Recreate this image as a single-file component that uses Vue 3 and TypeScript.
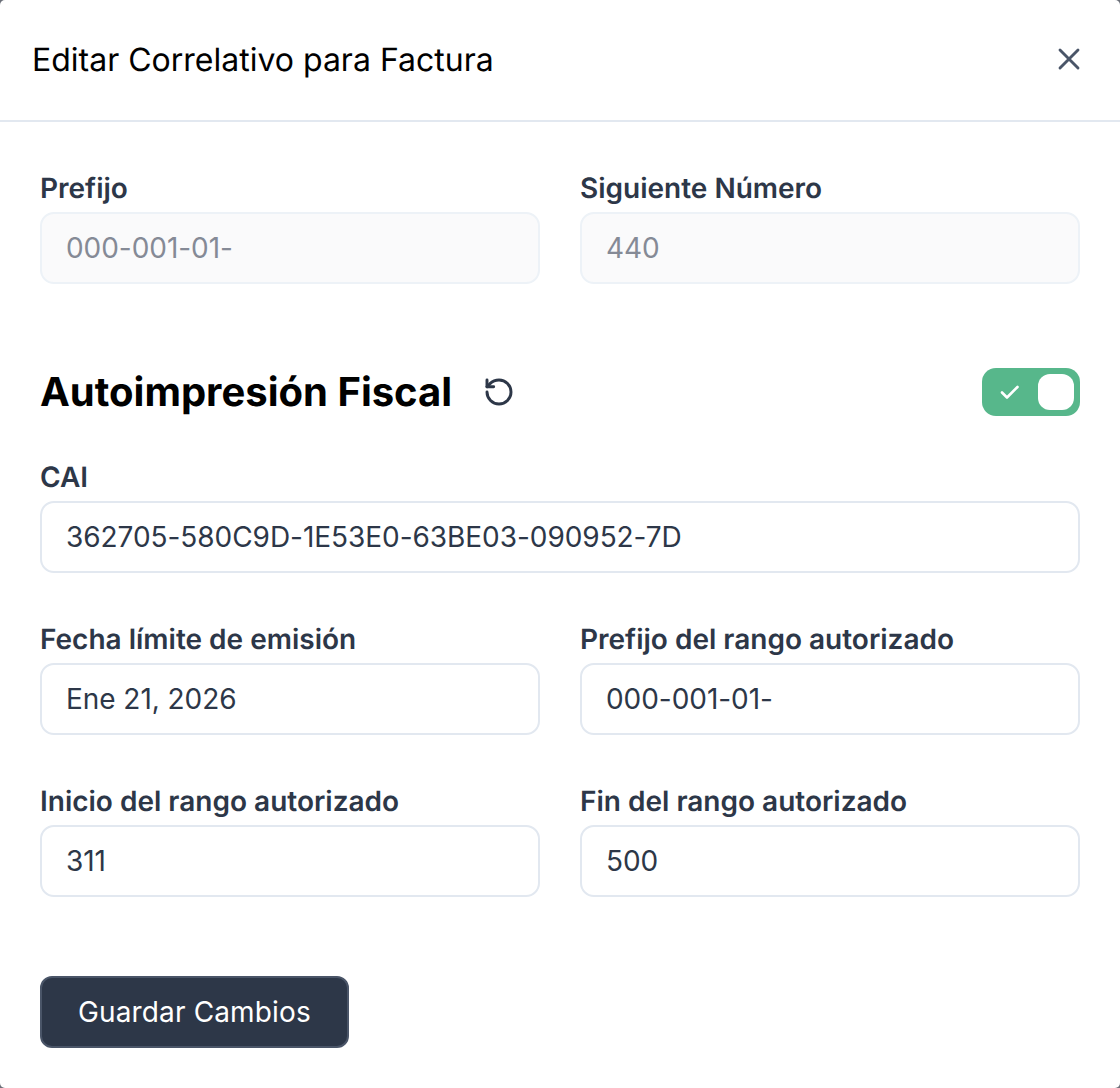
<script setup lang="ts">
interface Field {
  label: string
  value: string
}

const topFields: Field[] = [
  { label: 'Prefijo', value: '000-001-01-' },
  { label: 'Siguiente Número', value: '440' },
]

const rangeFields: Field[] = [
  { label: 'Fecha límite de emisión', value: 'Ene 21, 2026' },
  { label: 'Prefijo del rango autorizado', value: '000-001-01-' },
  { label: 'Inicio del rango autorizado', value: '311' },
  { label: 'Fin del rango autorizado', value: '500' },
]
</script>

<template>
  <div class="modal">
    <header class="modal-header">
      <h2 class="modal-title">Editar Correlativo para Factura</h2>
      <button class="close-btn" type="button" aria-label="Cerrar">
        <svg width="36" height="36" viewBox="0 0 24 24" fill="none" stroke="currentColor" stroke-width="1.9" stroke-linecap="round" stroke-linejoin="round">
          <path d="M6 18L18 6M6 6l12 12" />
        </svg>
      </button>
    </header>

    <div class="modal-body">
      <div class="grid">
        <div v-for="f in topFields" :key="f.label" class="field">
          <label class="label">{{ f.label }}</label>
          <input class="input" :value="f.value" disabled />
        </div>
      </div>

      <div class="section-head">
        <div class="section-title">
          <h3>Autoimpresión Fiscal</h3>
          <button class="reset-btn" type="button" aria-label="Restablecer">
            <svg width="32" height="32" viewBox="0 0 24 24" fill="none" stroke="currentColor" stroke-width="2.2" stroke-linecap="round" stroke-linejoin="round">
              <path d="M3 12a9 9 0 1 0 9-9 9.75 9.75 0 0 0-6.74 2.74L3 8" />
              <path d="M3 3v5h5" />
            </svg>
          </button>
        </div>
        <div class="toggle">
          <svg class="toggle-check" width="20" height="20" viewBox="0 0 20 20" fill="none" stroke="#fff" stroke-width="2.6" stroke-linecap="round" stroke-linejoin="round">
            <path d="M2 10.5l5 5L17.5 5" />
          </svg>
          <span class="toggle-knob"></span>
        </div>
      </div>

      <div class="field cai">
        <label class="label">CAI</label>
        <input class="input" value="362705-580C9D-1E53E0-63BE03-090952-7D" />
      </div>

      <div class="grid range">
        <div v-for="f in rangeFields" :key="f.label" class="field">
          <label class="label">{{ f.label }}</label>
          <input class="input" :value="f.value" />
        </div>
      </div>

      <button class="save-btn" type="button">Guardar Cambios</button>
    </div>
  </div>
</template>

<style>
html,
body {
  background: #6b6f78;
}
</style>

<style scoped>
.modal {
  width: 1120px;
  height: 1088px;
  background: #fff;
  border-radius: 5px;
  font-family: Inter, 'Liberation Sans', sans-serif;
  text-rendering: geometricPrecision;
  overflow: hidden;
}

.modal-header {
  height: 122px;
  box-sizing: border-box;
  border-bottom: 2px solid #e2e8f0;
  padding: 0 33px 2px 32px;
  display: flex;
  align-items: center;
  justify-content: space-between;
}

.modal-title {
  margin: 0;
  font-size: 32px;
  font-weight: 400;
  color: #000;
}

.close-btn {
  border: none;
  background: none;
  padding: 0;
  color: #4a5568;
  display: flex;
}

.modal-body {
  padding: 51px 40px 0;
}

.grid {
  display: grid;
  grid-template-columns: 1fr 1fr;
  column-gap: 40px;
}

.range {
  row-gap: 50.5px;
  margin-top: 51px;
}

.field {
  display: flex;
  flex-direction: column;
}

.label {
  font-size: 28px;
  line-height: 30px;
  font-weight: 600;
  color: #2d3748;
  margin-bottom: 9px;
}

.input {
  height: 72px;
  box-sizing: border-box;
  width: 100%;
  border: 2px solid #e2e8f0;
  border-radius: 14px;
  padding: 0 24px;
  font: inherit;
  font-size: 28px;
  letter-spacing: -0.05px;
  color: #2d3748;
  background: #fff;
  outline: none;
}

.input:disabled {
  background: #fafafb;
  border-color: #edf2f7;
  color: #858a96;
  opacity: 1;
}

.section-head {
  margin-top: 84px;
  display: flex;
  align-items: center;
  justify-content: space-between;
}

.section-title {
  display: flex;
  align-items: center;
  gap: 31px;
}

.section-title h3 {
  margin: 0;
  font-size: 40px;
  line-height: 48px;
  font-weight: 700;
  color: #000;
}

.reset-btn {
  border: none;
  background: none;
  padding: 0;
  color: #2d3748;
  display: flex;
}

.toggle {
  width: 98px;
  height: 48px;
  border-radius: 14px;
  background: #57b78b;
  display: flex;
  align-items: center;
  justify-content: space-between;
  padding: 0 6px 0 18px;
  box-sizing: border-box;
}

.toggle-knob {
  width: 36px;
  height: 36px;
  border-radius: 12px;
  background: #fff;
}

.cai {
  margin-top: 46px;
}

.save-btn {
  display: block;
  margin-top: 79.5px;
  height: 72px;
  padding: 0 36px;
  border: 2px solid #4a5568;
  border-radius: 12px;
  background: #2d3748;
  color: #fff;
  font: inherit;
  font-size: 28px;
  letter-spacing: 0.14px;
}
</style>
